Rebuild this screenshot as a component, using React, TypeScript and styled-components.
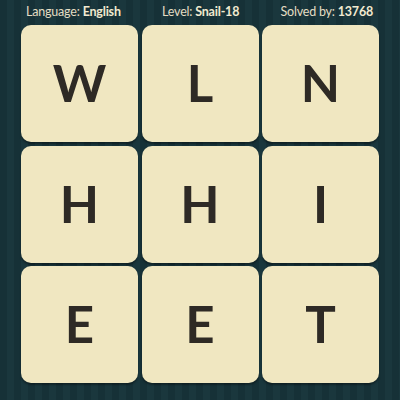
import React from "react";
import styled, { createGlobalStyle } from "styled-components";

const Global = createGlobalStyle`
  html, body { margin: 0; padding: 0; }
  body { width: 400px; height: 400px; overflow: hidden; }
`;

const Page = styled.div`
  width: 400px;
  height: 400px;
  box-sizing: border-box;
  background-color: #163137;
  background-image: repeating-linear-gradient(
    90deg,
    #163137 0px,
    #163137 7px,
    #1a373d 7px,
    #1a373d 14px
  );
  display: flex;
  flex-direction: column;
  font-family: Lato, "Open Sans", sans-serif;
`;

const Header = styled.div`
  height: 25px;
  display: flex;
  align-items: center;
  justify-content: space-between;
  padding: 0 27px 3px 26px;
  box-sizing: border-box;
  color: #e4ddc3;
  font-size: 12.5px;
`;

const Stat = styled.span`
  font-weight: 400;
  letter-spacing: -0.2px;
`;

const Value = styled.b`
  font-weight: 700;
  color: #f1ead0;
`;

const Grid = styled.div`
  display: grid;
  grid-template-columns: repeat(3, 1fr);
  grid-template-rows: repeat(3, 117px);
  gap: 3.5px;
  padding: 0 21px;
`;

const Tile = styled.div`
  background: #f0e7c1;
  border-radius: 10px;
  box-shadow: 0 2px 2px rgba(0, 0, 0, 0.35);
  display: flex;
  align-items: center;
  justify-content: center;
  color: #2e2a25;
  font-size: 51px;
  font-weight: 700;
  line-height: 1;
  padding-bottom: 2px;
  box-sizing: border-box;
`;

const letters = ["W", "L", "N", "H", "H", "I", "E", "E", "T"];

export default function App() {
  return (
    <Page>
      <Global />
      <Header>
        <Stat>
          Language: <Value>English</Value>
        </Stat>
        <Stat>
          Level: <Value>Snail-18</Value>
        </Stat>
        <Stat>
          Solved by: <Value>13768</Value>
        </Stat>
      </Header>
      <Grid>
        {letters.map((l, i) => (
          <Tile key={i}>{l}</Tile>
        ))}
      </Grid>
    </Page>
  );
}
